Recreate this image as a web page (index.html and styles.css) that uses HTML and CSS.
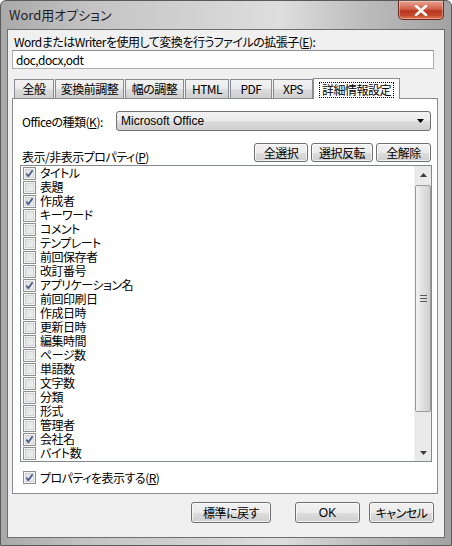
FILE: index.html
```html
<!DOCTYPE html>
<html lang="ja">
<head>
<meta charset="UTF-8">
<title>Word用オプション</title>
<link rel="stylesheet" href="styles.css">
</head>
<body>
<div class="window">
  <div class="titlebar">
    <span class="title">Word用オプション</span>
    <div class="close-btn">
      <svg width="14" height="11" viewBox="0 0 14 11"><path d="M2 1 L12 10 M12 1 L2 10" stroke="#fff" stroke-width="2.6" stroke-linecap="round"/></svg>
    </div>
  </div>

  <div class="client">
    <div class="ext-label">WordまたはWriterを使用して変換を行うファイルの拡張子(<u>E</u>):</div>
    <div class="textbox">doc,docx,odt</div>

    <div class="tabs">
      <div class="tab w-40">全般</div>
      <div class="tab w-69">変換前調整</div>
      <div class="tab w-60">幅の調整</div>
      <div class="tab w-44">HTML</div>
      <div class="tab w-42">PDF</div>
      <div class="tab w-40">XPS</div>
      <div class="tab selected"><span class="focus">詳細情報設定</span></div>
    </div>

    <div class="panel">
      <div class="row office-row">
        <span class="field-label">Officeの種類(<u>K</u>):</span>
        <div class="combo">
          <span class="combo-text">Microsoft Office</span>
          <svg width="8" height="4" viewBox="0 0 8 4"><path d="M0 0 H7 L3.5 4 Z" fill="#000"/></svg>
        </div>
      </div>

      <div class="row props-row">
        <span class="field-label">表示/非表示プロパティ(<u>P</u>)</span>
        <div class="btn-group">
          <div class="button small w-54">全選択</div>
          <div class="button small w-62">選択反転</div>
          <div class="button small w-55">全解除</div>
        </div>
      </div>

      <div class="listbox">
        <div class="items" id="items"></div>
        <div class="scrollbar">
          <div class="sb-arrow">
            <svg width="7" height="4" viewBox="0 0 7 4"><path d="M0 4 H7 L3.5 0 Z" fill="#3c3c3c"/></svg>
          </div>
          <div class="sb-track">
            <div class="sb-thumb">
              <span class="grip"></span><span class="grip"></span><span class="grip"></span>
            </div>
          </div>
          <div class="sb-arrow">
            <svg width="7" height="4" viewBox="0 0 7 4"><path d="M0 0 H7 L3.5 4 Z" fill="#3c3c3c"/></svg>
          </div>
        </div>
      </div>

      <label class="check-row show-props">
        <span class="checkbox checked"></span>
        <span>プロパティを表示する(<u>R</u>)</span>
      </label>
    </div>

    <div class="footer">
      <div class="button w-80">標準に戻す</div>
      <div class="button w-65 ok">OK</div>
      <div class="button w-65">キャンセル</div>
    </div>
  </div>
</div>

<script>
  const props = [
    ['タイトル', true], ['表題', false], ['作成者', true], ['キーワード', false],
    ['コメント', false], ['テンプレート', false], ['前回保存者', false], ['改訂番号', false],
    ['アプリケーション名', true], ['前回印刷日', false], ['作成日時', false], ['更新日時', false],
    ['編集時間', false], ['ページ数', false], ['単語数', false], ['文字数', false],
    ['分類', false], ['形式', false], ['管理者', false], ['会社名', true], ['バイト数', false]
  ];

  const list = document.getElementById('items');
  props.forEach(([name, checked]) => {
    const row = document.createElement('div');
    row.className = 'check-row item';
    const box = document.createElement('span');
    box.className = checked ? 'checkbox checked' : 'checkbox';
    const text = document.createElement('span');
    text.className = 'item-text';
    text.textContent = name;
    row.appendChild(box);
    row.appendChild(text);
    list.appendChild(row);
  });
</script>
</body>
</html>
```

FILE: styles.css
```css
* {
  box-sizing: border-box;
}

body {
  margin: 0;
  font-family: "Noto Sans CJK JP", sans-serif;
  font-size: 12px;
  font-feature-settings: "palt";
  letter-spacing: -0.5px;
  color: #000;
  background: #fff;
}

u {
  text-decoration: underline;
  text-underline-offset: 1px;
}

.window {
  width: 452px;
  height: 546px;
  border: 1px solid #5a5a5a;
  border-radius: 6px 6px 0 0;
  background: linear-gradient(to right, #a9a9a9 0%, #c4c4c4 20%, #d3d3d3 45%, #dedede 62%, #bdbdbd 80%, #a2a2a2 100%);
  display: flex;
  flex-direction: column;
}

.titlebar {
  height: 28px;
  display: flex;
  justify-content: space-between;
  align-items: flex-start;
  padding: 0 7px 0 8px;
}

.title {
  font-size: 13px;
  line-height: 28px;
  color: #1e1e1e;
  letter-spacing: 0;
}

.close-btn {
  width: 46px;
  height: 19px;
  border: 1px solid #6b2b22;
  border-top: none;
  border-radius: 0 0 5px 5px;
  background: linear-gradient(#e8a493 0%, #d26048 45%, #b8361f 55%, #c44a2e 80%, #e07a57 100%);
  box-shadow: inset 0 0 0 1px rgba(255, 220, 200, .45);
  display: flex;
  justify-content: center;
  align-items: center;
}

.client {
  margin: 0 6px 7px 6px;
  flex: 1;
  border: 1px solid #6e6e6e;
  background: #f0f0f0;
  padding: 0 0 0 4px;
}

.ext-label {
  margin-top: 5px;
  line-height: 14px;
  padding-left: 2px;
}

.textbox {
  margin-top: 1px;
  width: 422px;
  height: 19px;
  border: 1px solid #abadb3;
  border-top-color: #8e8f8f;
  background: #fff;
  line-height: 17px;
  padding-left: 3px;
}

.tabs {
  margin-top: 9px;
  height: 20px;
  display: flex;
  align-items: flex-end;
  padding-left: 2px;
  gap: 1px;
  position: relative;
  z-index: 1;
}

.tab {
  height: 19px;
  border: 1px solid #898c95;
  border-bottom: none;
  background: linear-gradient(#f2f2f2 0%, #ebebeb 50%, #dddddd 51%, #cfcfcf 100%);
  line-height: 18px;
  text-align: center;
}

.tab.selected {
  height: 21px;
  width: 87px;
  margin-bottom: -1px;
  margin-left: -1px;
  background: #fff;
  padding-top: 2px;
}

.focus {
  display: inline-block;
  outline: 1px dotted #000;
  line-height: 14px;
  padding: 0 2px;
}

.w-40 { width: 40px; }
.w-42 { width: 42px; }
.w-44 { width: 44px; }
.w-54 { width: 54px; }
.w-55 { width: 55px; }
.w-60 { width: 59px; }
.w-62 { width: 62px; }
.w-65 { width: 65px; }
.w-69 { width: 69px; }
.w-80 { width: 80px; }

.panel {
  width: 426px;
  height: 396px;
  border: 1px solid #898c95;
  background: #fff;
  padding: 12px 6px 0 7px;
}

.row {
  display: flex;
  align-items: center;
  justify-content: space-between;
}

.office-row {
  height: 20px;
  padding-left: 2px;
}

.combo {
  width: 315px;
  height: 20px;
  border: 1px solid #707070;
  border-radius: 3px;
  background: linear-gradient(#f2f2f2 0%, #ebebeb 50%, #dddddd 51%, #cfcfcf 100%);
  display: flex;
  align-items: center;
  justify-content: space-between;
  padding: 0 5px 0 4px;
}

.combo-text {
  font-family: "Liberation Sans", sans-serif;
  font-size: 12px;
  letter-spacing: 0;
}

.props-row {
  margin-top: 12px;
  height: 20px;
  align-items: flex-end;
  padding-left: 2px;
}

.props-row .field-label {
  line-height: 14px;
  margin-bottom: -1px;
}

.btn-group {
  display: flex;
  gap: 3px;
  align-self: flex-start;
}

.button {
  height: 21px;
  border: 1px solid #707070;
  border-radius: 3px;
  background: linear-gradient(#f2f2f2 0%, #ebebeb 50%, #dddddd 51%, #cfcfcf 100%);
  box-shadow: inset 0 0 0 1px rgba(255, 255, 255, .7);
  display: flex;
  justify-content: center;
  align-items: center;
}

.button.small {
  height: 19px;
}

.ok {
  font-family: "Liberation Sans", sans-serif;
  font-size: 12px;
  letter-spacing: 0;
}

.listbox {
  margin-top: 2px;
  width: 412px;
  height: 297px;
  border: 1px solid #828790;
  background: #fff;
  display: flex;
  justify-content: space-between;
}

.items {
  padding: 0 0 0 2px;
}

.check-row {
  display: flex;
  align-items: center;
  gap: 4px;
}

.item {
  height: 14px;
}

.item-text {
  display: block;
  height: 14px;
  line-height: 14px;
}

.checkbox {
  width: 13px;
  height: 13px;
  border: 1px solid #8e8f8f;
  background: linear-gradient(135deg, #dcdcdc 0%, #f4f4f4 100%);
  box-shadow: inset 0 0 0 1px #f4f4f4, inset 0 0 0 2px #d2d2d2;
  flex: none;
}

.checkbox.checked {
  background:
    url("data:image/svg+xml,%3Csvg xmlns='http://www.w3.org/2000/svg' width='11' height='11'%3E%3Cpath d='M2.3 5.6 L4.4 8.3 L8.6 2.2' fill='none' stroke='%234a5d8f' stroke-width='1.8'/%3E%3C/svg%3E") center / 11px 11px no-repeat,
    linear-gradient(135deg, #dcdcdc 0%, #f4f4f4 100%);
}

.scrollbar {
  width: 17px;
  display: flex;
  flex-direction: column;
  background: #eaeaea;
  border-left: 1px solid #f0f0f0;
}

.sb-arrow {
  height: 17px;
  display: flex;
  justify-content: center;
  align-items: center;
}

.sb-track {
  flex: 1;
  padding: 2px 0 32px;
}

.sb-thumb {
  height: 100%;
  border: 1px solid #9a9a9a;
  border-radius: 2px;
  background: linear-gradient(to right, #f2f2f2, #e0e0e0 50%, #cfcfcf);
  display: flex;
  flex-direction: column;
  justify-content: center;
  align-items: center;
  gap: 2px;
}

.grip {
  width: 7px;
  height: 1px;
  background: #5a5a5a;
}

.show-props {
  margin-top: 8px;
  padding-left: 3px;
  height: 14px;
}

.footer {
  display: flex;
  justify-content: flex-end;
  padding: 8px 10px 0 0;
}

.footer .button:nth-child(2) {
  margin-left: 24px;
}

.footer .button:nth-child(3) {
  margin-left: 9px;
}
```
